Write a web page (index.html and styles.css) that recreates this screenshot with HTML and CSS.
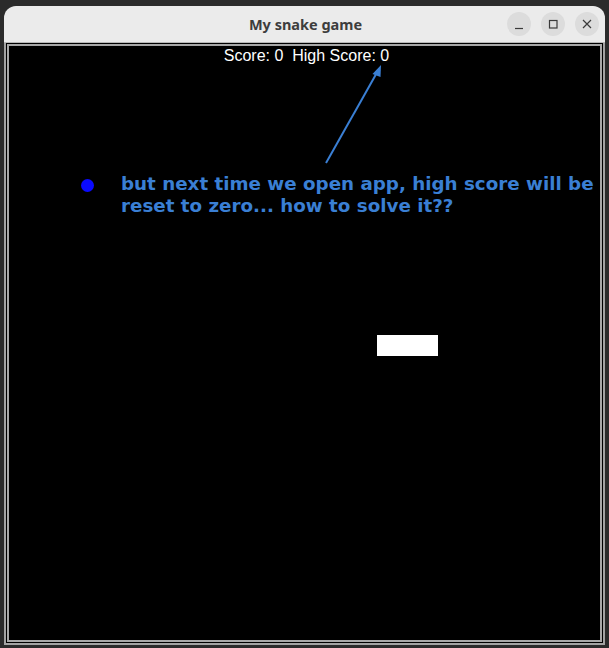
FILE: index.html
```html
<!DOCTYPE html>
<html>
<head>
<meta charset="utf-8">
<title>My snake game</title>
<link rel="stylesheet" href="styles.css">
</head>
<body>
<div class="window">
  <div class="titlebar">
    <div class="title">My snake game</div>
    <div class="controls">
      <span class="btn"><svg width="24" height="24" viewBox="0 0 24 24"><path d="M8 16.5h8" stroke="#3a3a3a" stroke-width="1.2" fill="none"/></svg></span>
      <span class="btn"><svg width="24" height="24" viewBox="0 0 24 24"><rect x="8.5" y="8.5" width="7.5" height="7.5" stroke="#3a3a3a" stroke-width="1.2" fill="none"/></svg></span>
      <span class="btn"><svg width="24" height="24" viewBox="0 0 24 24"><path d="M8 8l8 8M16 8l-8 8" stroke="#3a3a3a" stroke-width="1.2" fill="none"/></svg></span>
    </div>
  </div>
  <div class="frame">
    <div class="canvas">
      <div class="score">Score: 0&nbsp; High Score: 0</div>
      <div class="snake-dot"></div>
      <div class="food"></div>
      <svg class="arrow" width="591" height="594" viewBox="0 0 591 594">
        <path d="M317 117 L370 23" stroke="#3a7fd4" stroke-width="2" fill="none"/>
        <path d="M372 19 L363.5 28 L371.5 31 Z" fill="#3a7fd4"/>
      </svg>
      <div class="note">but next time we open app, high score will be<br>reset to zero... how to solve it??</div>
    </div>
  </div>
</div>
</body>
</html>
```
FILE: styles.css
```css
html, body {
  margin: 0;
  padding: 0;
}
body {
  background: #2b2b2b;
  width: 609px;
  height: 648px;
  overflow: hidden;
}
.window {
  width: 601px;
  margin: 6px 0 0 4px;
}
.titlebar {
  height: 36px;
  background: #ebebeb;
  border-radius: 12px 12px 0 0;
  border-bottom: 1px solid #b8b8b8;
  display: flex;
  align-items: center;
  justify-content: center;
  position: relative;
}
.title {
  font-family: "Noto Sans", "DejaVu Sans", sans-serif;
  font-weight: bold;
  font-size: 14.5px;
  color: #3d3d3d;
  padding-left: 2px;
}
.controls {
  position: absolute;
  right: 6px;
  top: 6px;
  display: flex;
  gap: 10px;
}
.btn {
  width: 24px;
  height: 24px;
  border-radius: 50%;
  background: #dcdcdc;
  display: block;
}
.btn svg {
  display: block;
}
.frame {
  background: #000;
  border: 2px solid #a3a3a3;
  border-top: 0;
  padding: 1px;
}
.canvas {
  background: #000;
  border: 2px solid #a8a8a8;
  height: 594px;
  position: relative;
  overflow: hidden;
}
.score {
  font-family: "Liberation Sans", Arial, sans-serif;
  font-size: 16px;
  color: #ffffff;
  text-align: center;
  padding-left: 4px;
  line-height: 18px;
  margin-top: 1px;
}
.snake-dot {
  position: absolute;
  left: 72px;
  top: 133px;
  width: 13px;
  height: 13px;
  border-radius: 50%;
  background: #0a0aff;
}
.food {
  position: absolute;
  left: 368px;
  top: 289px;
  width: 61px;
  height: 21px;
  background: #ffffff;
}
.arrow {
  position: absolute;
  left: 0;
  top: 0;
}
.note {
  position: absolute;
  left: 112px;
  top: 127px;
  font-family: "DejaVu Sans", sans-serif;
  font-weight: bold;
  font-size: 18.3px;
  line-height: 22px;
  color: #3a7fd4;
  white-space: nowrap;
}
```
